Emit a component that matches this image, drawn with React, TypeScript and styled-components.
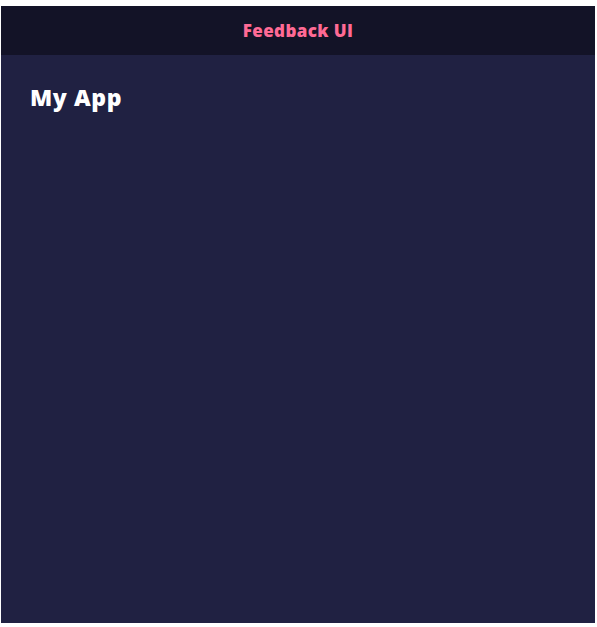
import React from "react";
import styled, { createGlobalStyle } from "styled-components";

const GlobalStyle = createGlobalStyle`
  html, body { margin: 0; padding: 0; background: #ffffff; }
  body { font-family: "Open Sans", "Noto Sans", sans-serif; }
  * { box-sizing: border-box; }
`;

const Frame = styled.div`
  width: 597px;
  height: 627px;
  padding: 6px 2px 4px 1px;
  background: #ffffff;
`;

const Page = styled.div`
  display: flex;
  flex-direction: column;
  height: 100%;
  background: #202142;
`;

const Header = styled.header`
  height: 49px;
  display: flex;
  align-items: center;
  justify-content: center;
  background: rgba(0, 0, 0, 0.4);
`;

const Brand = styled.h2`
  margin: 0;
  font-size: 17px;
  font-weight: 800;
  color: #ff6a95;
  letter-spacing: 0.4px;
`;

const Container = styled.main`
  padding: 26px 29px;
`;

const Title = styled.h1`
  margin: 0;
  font-size: 23px;
  font-weight: 800;
  color: #ffffff;
  letter-spacing: 0.6px;
`;

export default function App() {
  return (
    <>
      <GlobalStyle />
      <Frame>
        <Page>
          <Header>
            <Brand>Feedback UI</Brand>
          </Header>
          <Container>
            <Title>My App</Title>
          </Container>
        </Page>
      </Frame>
    </>
  );
}
